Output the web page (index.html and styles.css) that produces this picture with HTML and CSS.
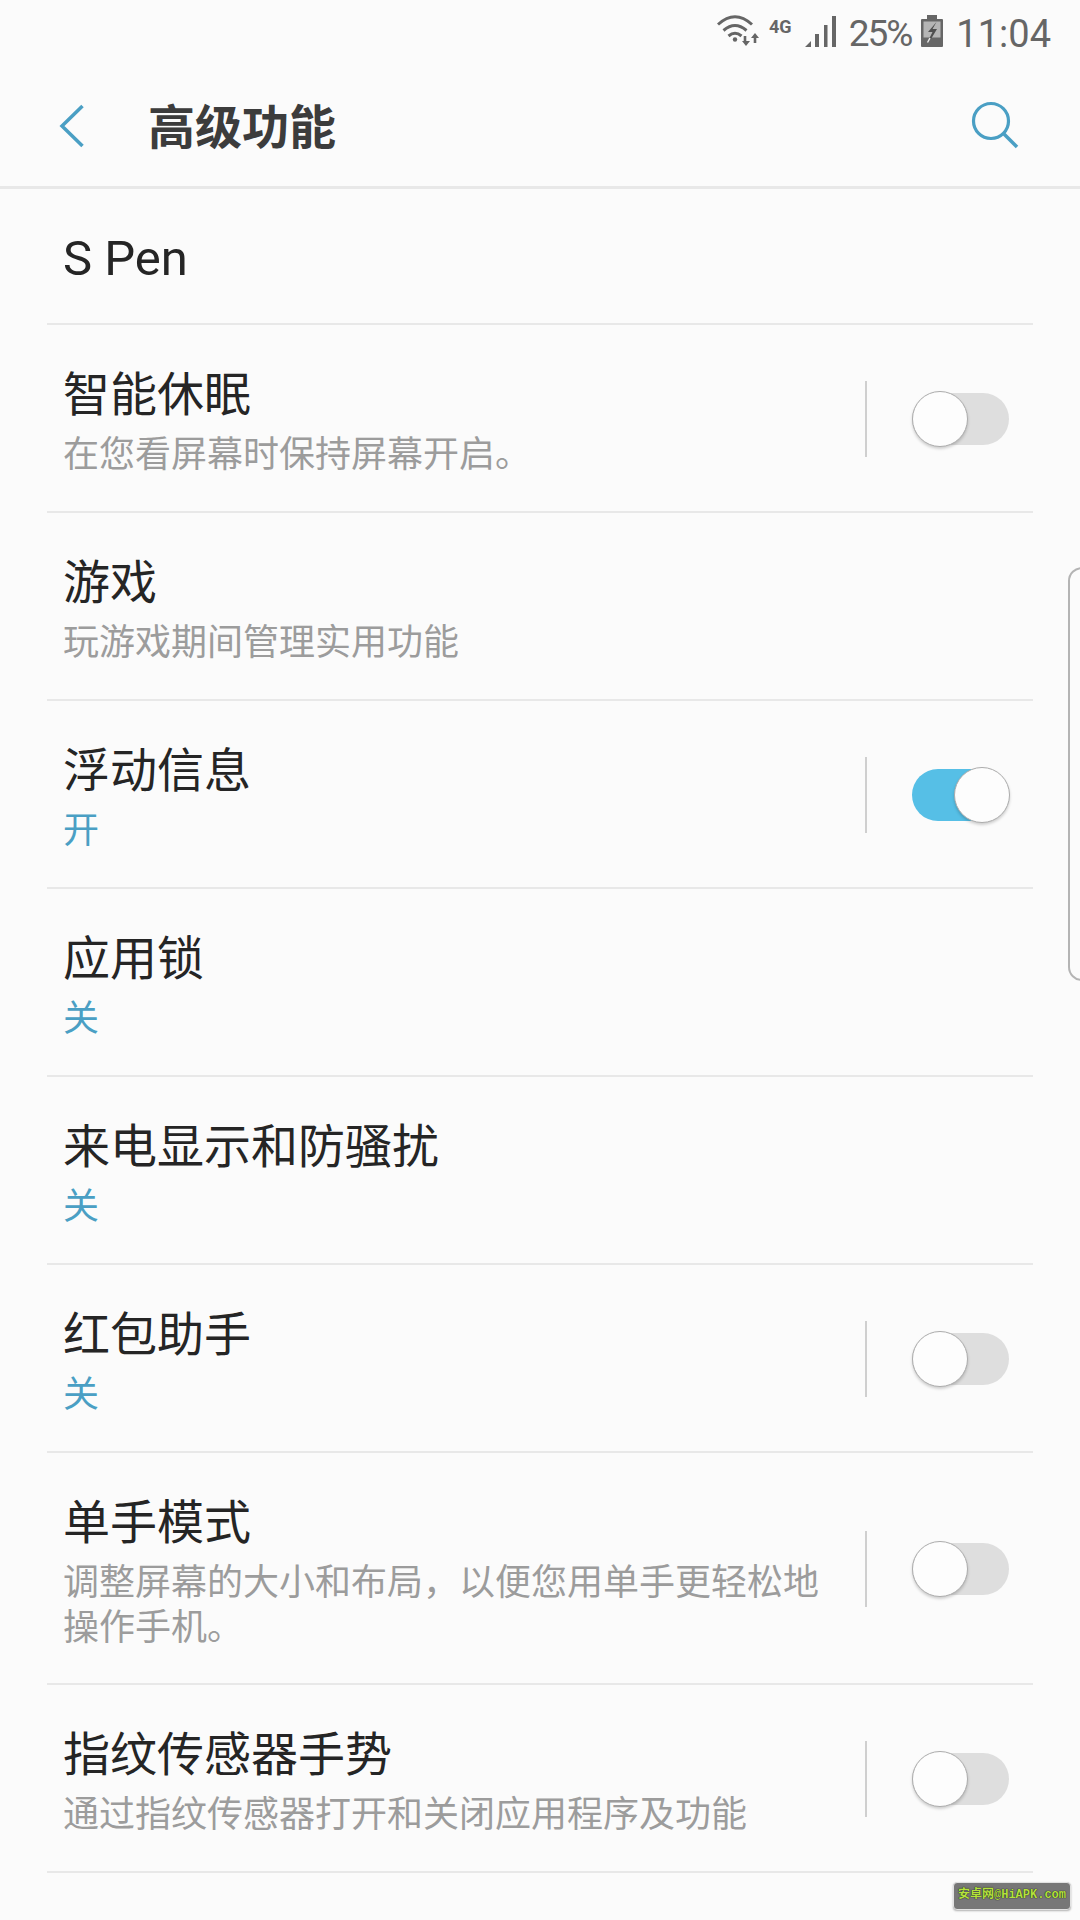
FILE: index.html
```html
<!DOCTYPE html>
<html lang="zh-CN">
<head>
<meta charset="utf-8">
<title>高级功能</title>
<link rel="stylesheet" href="styles.css">
</head>
<body>
<div class="screen">
  <div class="status">
    <svg class="ic-wifi" width="42" height="32" viewBox="0 0 42 32">
      <g fill="none" stroke="#666" stroke-width="3">
        <path d="M1 9.500Q18-6 35 9.500"/>
        <path d="M6.500 15.500Q18 5.500 29.500 15.500"/>
        <path d="M11.500 21Q18 15.500 24.500 21"/>
      </g>
      <circle cx="18" cy="24.500" r="2.200" fill="#666"/>
      <path d="M26.700 21h2.600v5H33l-4 5-4-5h1.700ZM38 18l4 5h-2.700v5h-2.600v-5H34Z" fill="#666"/>
    </svg>
    <span class="net">4G</span>
    <svg class="ic-signal" width="32" height="32" viewBox="0 0 32 32">
      <path d="M0 31 6 25V31ZM10 18h4v13h-4ZM19 9h3.500v22H19ZM27 0h4v31h-4Z" fill="#666"/>
    </svg>
    <span class="pct">25%</span>
    <svg class="ic-batt" width="22" height="32" viewBox="0 0 22 32">
      <path d="M6 0h10v4h5a1 1 0 0 1 1 1v26a1 1 0 0 1-1 1H1a1 1 0 0 1-1-1V5a1 1 0 0 1 1-1h5Z" fill="#666"/>
      <rect x="2.500" y="6.500" width="17" height="16" fill="#b5b5b5"/>
      <path d="M15.500 7 7 17h4.500L8 24h2l6-10h-4.500Z" fill="#4f4f4f"/>
      <path d="M9 23 6.500 27.500" stroke="#e8e8e8" stroke-width="1.500"/>
    </svg>
    <span class="clock">11:04</span>
  </div>

  <header class="appbar">
    <svg class="ic-back" width="26" height="44" viewBox="0 0 26 44">
      <path d="M23.500 2 3 22l20.500 20" fill="none" stroke="#4a9fc4" stroke-width="3.500"/>
    </svg>
    <h1 class="page-title">高级功能</h1>
    <svg class="ic-search" width="48" height="48" viewBox="0 0 48 48">
      <circle cx="20" cy="20" r="17.500" fill="none" stroke="#4a9fc4" stroke-width="3.200"/>
      <path d="M32.500 32.500 46 46" fill="none" stroke="#4a9fc4" stroke-width="3.500"/>
    </svg>
  </header>

  <main class="list">
    <div class="row row-plain"><div class="row-text"><div class="row-title latin">S Pen</div></div></div>

    <div class="row">
      <div class="row-text"><div class="row-title">智能休眠</div><div class="row-sub">在您看屏幕时保持屏幕开启。</div></div>
      <div class="ctl"><span class="ctl-rule"></span><span class="toggle"><span class="knob"></span></span></div>
    </div>

    <div class="row">
      <div class="row-text"><div class="row-title">游戏</div><div class="row-sub">玩游戏期间管理实用功能</div></div>
    </div>

    <div class="row">
      <div class="row-text"><div class="row-title">浮动信息</div><div class="row-sub state">开</div></div>
      <div class="ctl"><span class="ctl-rule"></span><span class="toggle on"><span class="knob"></span></span></div>
    </div>

    <div class="row">
      <div class="row-text"><div class="row-title">应用锁</div><div class="row-sub state">关</div></div>
    </div>

    <div class="row">
      <div class="row-text"><div class="row-title">来电显示和防骚扰</div><div class="row-sub state">关</div></div>
    </div>

    <div class="row">
      <div class="row-text"><div class="row-title">红包助手</div><div class="row-sub state">关</div></div>
      <div class="ctl"><span class="ctl-rule"></span><span class="toggle"><span class="knob"></span></span></div>
    </div>

    <div class="row row-wrap">
      <div class="row-text"><div class="row-title">单手模式</div><div class="row-sub">调整屏幕的大小和布局<span class="cn-comma">&#xFF0C;</span>以便您用单手更轻松地<br>操作手机。</div></div>
      <div class="ctl"><span class="ctl-rule"></span><span class="toggle"><span class="knob"></span></span></div>
    </div>

    <div class="row">
      <div class="row-text"><div class="row-title">指纹传感器手势</div><div class="row-sub">通过指纹传感器打开和关闭应用程序及功能</div></div>
      <div class="ctl"><span class="ctl-rule"></span><span class="toggle"><span class="knob"></span></span></div>
    </div>
  </main>

  <div class="edge-handle"></div>
  <div class="watermark">安卓网@HiAPK.com</div>
</div>
</body>
</html>
```

FILE: styles.css
```css
* { box-sizing: border-box; }
html, body { margin: 0; padding: 0; }
body {
  width: 1080px;
  height: 1920px;
  overflow: hidden;
  background: #fbfbfb;
  font-family: "Noto Sans CJK SC", "Noto Sans", sans-serif;
}
.screen { position: relative; width: 1080px; height: 1920px; overflow: hidden; }

.status {
  height: 60px;
  display: flex;
  align-items: flex-start;
  padding: 15px 29px 0 0;
  justify-content: flex-end;
  color: #666;
  font-family: Roboto, sans-serif;
}
.ic-wifi { margin-right: 10px; }
.net { font-size: 18px; font-weight: 700; line-height: 17px; margin-top: 3px; margin-right: 13px; }
.ic-signal { margin-right: 12px; margin-top: 1px; }
.pct { font-size: 37px; line-height: 34px; margin-top: 2px; margin-right: 10px; letter-spacing: -2px; }
.ic-batt { margin-right: 13px; }
.clock { font-size: 38px; line-height: 34px; margin-top: 2px; }

.appbar {
  height: 129px;
  border-bottom: 3px solid #e8e8e8;
  display: flex;
  align-items: center;
  padding: 6px 61px 0 59px;
}
.ic-back { margin-right: 63px; }
.ic-search { margin-top: -3px; }
.page-title {
  flex: 1;
  margin: 0 0 5px;
  font-size: 47px;
  font-weight: 700;
  line-height: 60px;
  color: #3c3c3c;
}

.list { display: flex; flex-direction: column; }
.row {
  margin: 0 47px;
  padding: 38px 24px 37px 16px;
  border-bottom: 2px solid #e8e8e8;
  display: flex;
  align-items: center;
  position: relative;
}
.row-wrap { padding-bottom: 36px; }
.row-plain { padding-top: 43px; padding-bottom: 37px; height: 136px; }
.row-text { flex: 1; min-width: 0; }
.row-title {
  font-size: 47px;
  line-height: 56px;
  color: #252525;
}
.row-title.latin { font-family: Roboto, sans-serif; font-size: 49px; }
.row-sub {
  margin-top: 10px;
  font-size: 36px;
  line-height: 45px;
  color: #9c9c9c;
}
.row-sub.state { color: #4a9fc4; }
.cn-comma { font-family: "Noto Sans CJK TC", sans-serif; }

.ctl {
  display: flex;
  align-items: center;
  align-self: center;
  flex: none;
}
.ctl-rule { width: 2px; height: 76px; background: #cfcfcf; margin-right: 45px; }
.toggle {
  position: relative;
  display: block;
  width: 97px;
  height: 52px;
  border-radius: 26px;
  background: #dedede;
}
.toggle.on { background: #56bfe6; }
.knob {
  position: absolute;
  left: 0;
  top: -2px;
  width: 56px;
  height: 56px;
  border-radius: 50%;
  background: #fdfdfd;
  border: 1.500px solid #acacac;
  box-shadow: 0 2px 3px rgba(0,0,0,.18);
}
.toggle.on .knob { left: 42px; }

.edge-handle {
  position: absolute;
  left: 1068px;
  top: 567px;
  width: 30px;
  height: 414px;
  border: 2px solid #b4b4b4;
  border-radius: 14px;
}
.watermark {
  position: absolute;
  left: 953px;
  top: 1882px;
  width: 118px;
  height: 28px;
  background: #777;
  border: 1.500px solid #e2e2e2;
  border-radius: 4px;
  box-shadow: 0 1px 2px rgba(0,0,0,.3);
  color: #b4e23c;
  font-family: "Liberation Mono", "Noto Sans CJK SC", monospace;
  font-size: 12px;
  font-weight: 700;
  line-height: 25px;
  text-align: center;
  white-space: nowrap;
  text-shadow: 0 0 1px #222, 0 0 1px #222;
}
```
